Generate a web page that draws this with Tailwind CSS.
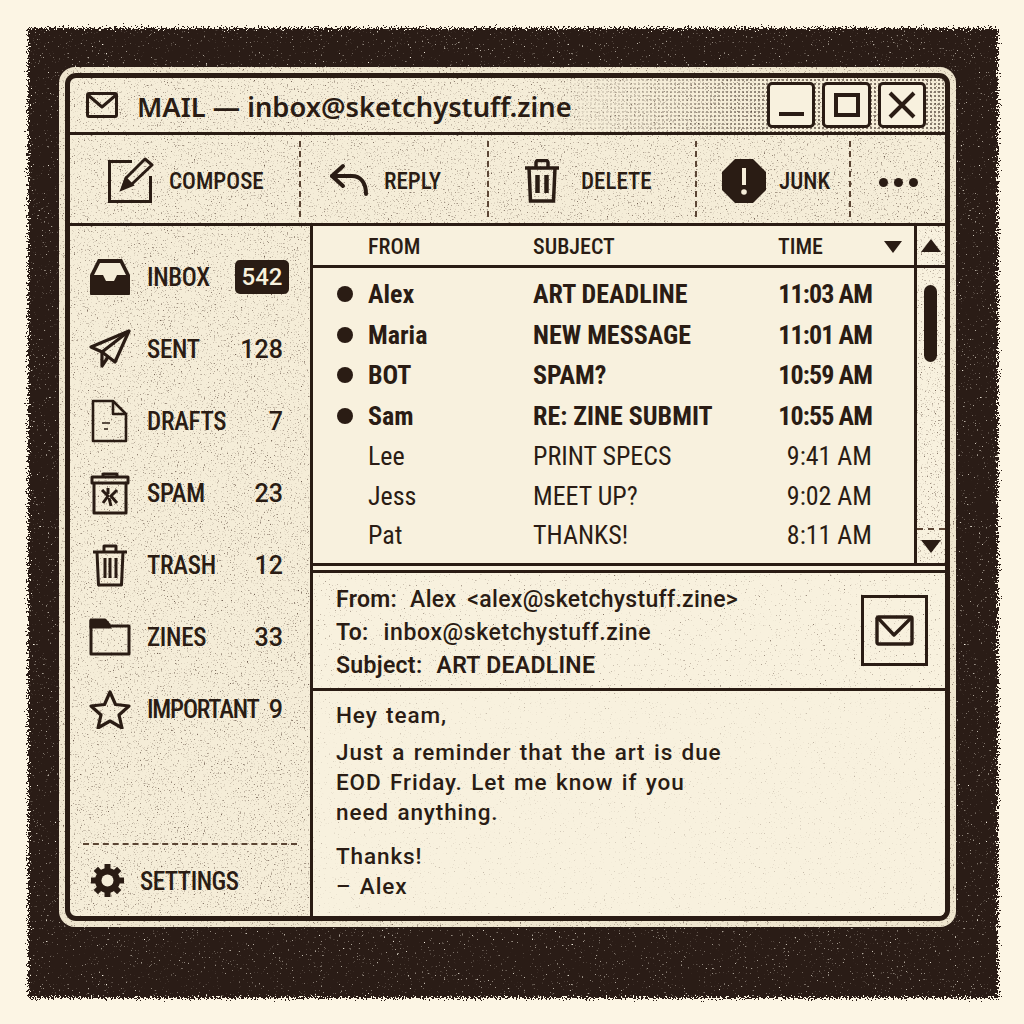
<!DOCTYPE html>
<html lang="en">
<head>
<meta charset="UTF-8">
<title>Mail</title>
<script src="https://cdn.jsdelivr.net/npm/@tailwindcss/browser@4"></script>
</head>
<body class="bg-[#fcf5e4] text-[#2a1c14] font-['Roboto',sans-serif]">
<!-- shared filters -->
<svg class="absolute w-0 h-0">
  <defs>
    <filter id="grain" x="0" y="0" width="100%" height="100%">
      <feTurbulence type="fractalNoise" baseFrequency="0.7" numOctaves="2" seed="4"/>
      <feColorMatrix values="0 0 0 0 0.16  0 0 0 0 0.11  0 0 0 0 0.08  2.4 2.4 0 0 -2.76"/>
    </filter>
    <filter id="grainfine" x="0" y="0" width="100%" height="100%">
      <feTurbulence type="fractalNoise" baseFrequency="0.8" numOctaves="2" seed="9"/>
      <feColorMatrix values="0 0 0 0 0.16  0 0 0 0 0.11  0 0 0 0 0.08  2.2 2.2 0 0 -2.78"/>
    </filter>
    <filter id="specks" x="0" y="0" width="100%" height="100%">
      <feTurbulence type="fractalNoise" baseFrequency="0.55" numOctaves="3" seed="12"/>
      <feColorMatrix values="0 0 0 0 0.95  0 0 0 0 0.9  0 0 0 0 0.78  3 3 0 0 -3.85"/>
    </filter>
    <filter id="rough" x="-2%" y="-2%" width="104%" height="104%">
      <feTurbulence type="fractalNoise" baseFrequency="0.6" numOctaves="2" seed="3"/>
      <feDisplacementMap in="SourceGraphic" scale="12"/>
    </filter>
  </defs>
</svg>

<div class="w-[1024px] h-[1024px] pt-[28px] pl-[28px] overflow-hidden">
  <!-- dark print panel -->
  <div class="relative w-[970px] h-[970px] pt-[39px] pl-[31px]">
    <div class="absolute inset-0 bg-[#2a1c14] [filter:url(#rough)]"></div>
    <svg class="absolute inset-0 w-full h-full pointer-events-none"><rect width="100%" height="100%" filter="url(#specks)"/></svg>

    <!-- window -->
    <div class="relative w-[897px] h-[860px] rounded-[16px] bg-[#efe6cf] p-[6px]">
      <svg class="absolute inset-0 w-full h-full pointer-events-none rounded-[16px]"><rect width="100%" height="100%" filter="url(#grain)"/></svg>
      <div class="relative w-full h-full rounded-[11px] border-[5px] border-[#2a1c14] bg-[#f5edd8] flex flex-col overflow-hidden">

        <!-- title bar -->
        <div class="relative h-[57px] shrink-0 border-b-[3px] border-[#2a1c14] flex items-center pl-[16px] pr-[19px]">
          <svg class="absolute inset-0 w-full h-full pointer-events-none"><rect width="100%" height="100%" filter="url(#grain)"/></svg>
          <div class="absolute inset-y-0 right-0 w-[400px] bg-[radial-gradient(#2a1c14_0.9px,transparent_1.4px)] bg-[size:4px_4px] [mask-image:linear-gradient(90deg,transparent,black_60%)] opacity-55"></div>
          <svg class="relative w-[32px] h-[26px] shrink-0" viewBox="0 0 32 26" fill="none" stroke="#2a1c14" stroke-width="3" stroke-linejoin="round"><rect x="1.5" y="1.5" width="29" height="23" rx="1.5"/><path d="M2 3l14 12L30 3"/></svg>
          <h1 class="relative ml-[19px] mt-[3px] font-['Noto_Sans',sans-serif] font-semibold text-[27.300px] leading-none whitespace-nowrap">MAIL — inbox@sketchystuff.zine</h1>
          <div class="relative ml-auto flex gap-[7px]">
            <div class="w-[48px] h-[46px] rounded-[5px] border-[3px] border-[#2a1c14] bg-[#f8f1de] flex items-end justify-center pb-[9px]"><div class="w-[25px] h-[4px] bg-[#2a1c14]"></div></div>
            <div class="w-[49px] h-[46px] rounded-[5px] border-[3px] border-[#2a1c14] bg-[#f8f1de] flex items-center justify-center"><div class="w-[26px] h-[24px] border-[4px] border-[#2a1c14]"></div></div>
            <div class="w-[48px] h-[46px] rounded-[5px] border-[3px] border-[#2a1c14] bg-[#f8f1de] flex items-center justify-center"><svg class="w-[28px] h-[28px]" viewBox="0 0 28 28" stroke="#2a1c14" stroke-width="4"><path d="M2 2l24 24M26 2L2 26"/></svg></div>
          </div>
        </div>

        <!-- toolbar -->
        <div class="relative h-[91px] shrink-0 border-b-[3px] border-[#2a1c14] flex items-stretch text-[23px] font-medium font-stretch-[84%] leading-none">
          <svg class="absolute inset-0 w-full h-full pointer-events-none"><rect width="100%" height="100%" filter="url(#grain)"/></svg>
          <div class="relative w-[229px] flex items-center pl-[37px] gap-[15px] pt-[4px]">
            <svg class="w-[47px] h-[47px] shrink-0 -mt-[3px]" viewBox="0 0 47 47" fill="none" stroke="#2a1c14" stroke-width="3"><path d="M25 5.500H2.500v40h41V20"/><path d="M16 31l3-9L38 3l7 6-20 19z" stroke-linejoin="round"/><path d="M15 33l4-10 6 6z" fill="#2a1c14"/></svg>
            <span>COMPOSE</span>
          </div>
          <div class="w-[2px] my-[6px] border-l-[2px] border-dashed border-[#5b4534]"></div>
          <div class="relative w-[186px] flex items-center pl-[28px] gap-[15px] pt-[4px]">
            <svg class="w-[40px] h-[34px] shrink-0 -mt-[3px]" viewBox="0 0 40 34" fill="none" stroke="#2a1c14" stroke-width="4" stroke-linecap="round" stroke-linejoin="round"><path d="M14 3L3 13l11 10"/><path d="M3 13h20c8 0 14 6 14 18"/></svg>
            <span>REPLY</span>
          </div>
          <div class="w-[2px] my-[6px] border-l-[2px] border-dashed border-[#5b4534]"></div>
          <div class="relative w-[206px] flex items-center pl-[35px] gap-[21px] pt-[4px]">
            <svg class="w-[36px] h-[44px] shrink-0" viewBox="0 0 36 44" fill="none" stroke="#2a1c14" stroke-width="3.5"><path d="M1 9h34"/><path d="M12 8V3.500c0-1 1-2 2-2h8c1 0 2 1 2 2V8"/><path d="M5 9l1.500 33h23L31 9"/><path d="M13.500 16v18M22.500 16v18" stroke-width="4.500"/></svg>
            <span>DELETE</span>
          </div>
          <div class="w-[2px] my-[6px] border-l-[2px] border-dashed border-[#5b4534]"></div>
          <div class="relative w-[152px] flex items-center pl-[25px] gap-[13px] pt-[4px]">
            <svg class="w-[44px] h-[44px] shrink-0" viewBox="0 0 44 44"><path d="M13 0h18l13 13v18L31 44H13L0 31V13z" fill="#2a1c14"/><path d="M22 9v17" stroke="#f5edd8" stroke-width="4"/><circle cx="22" cy="33" r="2.800" fill="#f5edd8"/></svg>
            <span class="font-stretch-[78%]">JUNK</span>
          </div>
          <div class="w-[2px] my-[6px] border-l-[2px] border-dashed border-[#5b4534]"></div>
          <div class="relative flex-1 flex items-center pl-[28px] gap-[6px] pt-[7px]">
            <span class="w-[9px] h-[9px] rounded-full bg-[#2a1c14]"></span><span class="w-[9px] h-[9px] rounded-full bg-[#2a1c14]"></span><span class="w-[9px] h-[9px] rounded-full bg-[#2a1c14]"></span>
          </div>
        </div>

        <!-- main -->
        <div class="flex-1 flex min-h-0">
          <!-- sidebar -->
          <aside class="relative w-[243px] shrink-0 border-r-[3px] border-[#2a1c14] flex flex-col text-[25px] font-medium font-stretch-[76%] leading-none">
            <svg class="absolute inset-0 w-full h-full pointer-events-none"><rect width="100%" height="100%" filter="url(#grain)"/></svg>
            <ul class="relative flex flex-col pt-[15px] pl-[19px] pr-[27px]">
              <li class="h-[72px] flex items-center">
                <svg class="w-[42px] h-[38px] shrink-0" viewBox="0 0 42 38"><path d="M1 36V17L9 1h24l8 16v19c0 1-1 1-1 1H2s-1 0-1-1z" fill="#2a1c14"/><path d="M5 17l6-12h20l6 12H28l-3 6h-8l-3-6z" fill="#f5edd8"/></svg>
                <span class="ml-[16px] tracking-[-0.3px]">INBOX</span>
                <span class="ml-auto -mr-[6px] w-[54px] h-[34px] rounded-[5px] bg-[#2a1c14] text-[#f8f1de] flex items-center justify-center font-stretch-[90%] text-[24px]">542</span>
              </li>
              <li class="h-[72px] flex items-center">
                <svg class="w-[42px] h-[40px] shrink-0" viewBox="0 0 42 40" fill="none" stroke="#2a1c14" stroke-width="3.200" stroke-linejoin="round"><path d="M40 2L2 18l11 5 13 10z"/><path d="M40 2L13 23l0 14 6-9"/></svg>
                <span class="ml-[16px] tracking-[-0.3px]">SENT</span><span class="ml-auto font-stretch-[95%]">128</span>
              </li>
              <li class="h-[72px] flex items-center">
                <svg class="w-[42px] h-[44px] shrink-0" viewBox="0 0 42 44" fill="none" stroke="#2a1c14" stroke-width="2.600" stroke-linejoin="round"><path d="M4 2h20l13 13v27H4z"/><path d="M24 2v13h13"/><path d="M13 24h8M15 30h4" stroke-width="1.500"/></svg>
                <span class="ml-[16px] tracking-[-0.3px]">DRAFTS</span><span class="ml-auto font-stretch-[95%]">7</span>
              </li>
              <li class="h-[72px] flex items-center">
                <svg class="w-[42px] h-[44px] shrink-0" viewBox="0 0 42 44" fill="none" stroke="#2a1c14" stroke-width="3" stroke-linejoin="round"><path d="M3 6h36v6H3z"/><path d="M14 5V3h14v3"/><path d="M5 12v30h32V12"/><path d="M13 19l6 6-5 7M28 19l-6 6 6 7M19 17v6M20 27l2 8" stroke-width="3"/></svg>
                <span class="ml-[16px] tracking-[-0.3px]">SPAM</span><span class="ml-auto font-stretch-[95%]">23</span>
              </li>
              <li class="h-[72px] flex items-center">
                <svg class="w-[42px] h-[44px] shrink-0" viewBox="0 0 42 44" fill="none" stroke="#2a1c14" stroke-width="3" stroke-linejoin="round"><path d="M4 9h34"/><path d="M15 8V3h12v5"/><path d="M8 9l1.500 33h23L34 9"/><path d="M16 15v20M21 15v20M27 15v20" stroke-width="3"/></svg>
                <span class="ml-[16px] tracking-[-0.3px]">TRASH</span><span class="ml-auto font-stretch-[95%]">12</span>
              </li>
              <li class="h-[72px] flex items-center">
                <svg class="w-[42px] h-[38px] shrink-0" viewBox="0 0 42 38" fill="none" stroke="#2a1c14" stroke-width="3"><path d="M2 36V2h14l5 6h19v28z" stroke-linejoin="round"/><path d="M2 4h14l4 5H2z" fill="#2a1c14"/></svg>
                <span class="ml-[16px] tracking-[-0.3px]">ZINES</span><span class="ml-auto font-stretch-[95%]">33</span>
              </li>
              <li class="h-[72px] flex items-center">
                <svg class="w-[42px] h-[40px] shrink-0" viewBox="0 0 42 40" fill="none" stroke="#2a1c14" stroke-width="3.200" stroke-linejoin="round"><path d="M21 3l5.500 12.500L40 17l-10 9 3 13-12-7-12 7 3-13L2 17l13.500-1.500z"/></svg>
                <span class="ml-[16px] whitespace-nowrap font-stretch-[75%] tracking-[-1.200px]">IMPORTANT</span><span class="ml-auto font-stretch-[95%]">9</span>
              </li>
            </ul>
            <div class="relative mt-auto mx-[13px] border-t-[2px] border-dashed border-[#5b4534]"></div>
            <div class="relative h-[71px] flex items-center pl-[20px] gap-[15px]">
              <svg class="w-[35px] h-[35px] shrink-0" viewBox="0 0 35 35"><circle cx="17.500" cy="17.500" r="12.500" fill="#2a1c14"/><path d="M17.500 1v33M1 17.500h33M5.800 5.800l23.400 23.400M29.200 5.800L5.800 29.200" stroke="#2a1c14" stroke-width="6"/><circle cx="17.500" cy="17.500" r="6" fill="#f5edd8"/></svg>
              <span class="pt-[2px] tracking-[-0.5px]">SETTINGS</span>
            </div>
          </aside>

          <!-- right column -->
          <div class="flex-1 flex flex-col min-w-0 bg-[#f8f1de]">
            <!-- list + scrollbar -->
            <div class="h-[340px] shrink-0 flex border-b-[3px] border-[#2a1c14]">
              <div class="w-[604px] shrink-0 border-r-[3px] border-[#2a1c14] flex flex-col">
                <div class="h-[42px] shrink-0 border-b-[3px] border-[#2a1c14] flex items-center pl-[55px] pt-[3px] text-[22px] font-medium font-stretch-[84%] leading-none">
                  <span class="w-[165px]">FROM</span><span class="w-[245px]">SUBJECT</span><span class="w-[106px]">TIME</span>
                  <span class="w-0 h-0 border-x-[9px] border-x-transparent border-t-[12px] border-t-[#2a1c14]"></span>
                </div>
                <div class="flex-1 pt-[6px] text-[26px] font-stretch-[78%] leading-none whitespace-nowrap">
                  <div class="h-[40.500px] flex items-center font-bold"><span class="w-[16px] h-[16px] ml-[24px] mr-[15px] rounded-full bg-[#2a1c14]"></span><span class="w-[165px]">Alex</span><span class="w-[230px]">ART DEADLINE</span><span class="w-[109px] text-right font-stretch-[75%] tracking-[-0.900px]">11:03 AM</span></div>
                  <div class="h-[40.500px] flex items-center font-bold"><span class="w-[16px] h-[16px] ml-[24px] mr-[15px] rounded-full bg-[#2a1c14]"></span><span class="w-[165px]">Maria</span><span class="w-[230px]">NEW MESSAGE</span><span class="w-[109px] text-right font-stretch-[75%] tracking-[-0.900px]">11:01 AM</span></div>
                  <div class="h-[40.500px] flex items-center font-bold"><span class="w-[16px] h-[16px] ml-[24px] mr-[15px] rounded-full bg-[#2a1c14]"></span><span class="w-[165px]">BOT</span><span class="w-[230px]">SPAM?</span><span class="w-[109px] text-right font-stretch-[75%] tracking-[-0.900px]">10:59 AM</span></div>
                  <div class="h-[40.500px] flex items-center font-bold"><span class="w-[16px] h-[16px] ml-[24px] mr-[15px] rounded-full bg-[#2a1c14]"></span><span class="w-[165px]">Sam</span><span class="w-[230px]">RE: ZINE SUBMIT</span><span class="w-[109px] text-right font-stretch-[75%] tracking-[-0.900px]">10:55 AM</span></div>
                  <div class="h-[40px] flex items-center pl-[55px]"><span class="w-[165px]">Lee</span><span class="w-[230px]">PRINT SPECS</span><span class="w-[109px] text-right">9:41 AM</span></div>
                  <div class="h-[39px] flex items-center pl-[55px]"><span class="w-[165px]">Jess</span><span class="w-[230px]">MEET UP?</span><span class="w-[109px] text-right">9:02 AM</span></div>
                  <div class="h-[39px] flex items-center pl-[55px]"><span class="w-[165px]">Pat</span><span class="w-[230px]">THANKS!</span><span class="w-[109px] text-right">8:11 AM</span></div>
                </div>
              </div>
              <!-- scrollbar -->
              <div class="relative flex-1 flex flex-col items-center">
                <svg class="absolute inset-0 w-full h-full pointer-events-none"><rect width="100%" height="100%" filter="url(#grain)"/></svg>
                <div class="relative h-[42px] w-full shrink-0 border-b-[3px] border-[#2a1c14] flex items-center justify-center"><span class="w-0 h-0 border-x-[10px] border-x-transparent border-b-[13px] border-b-[#2a1c14]"></span></div>
                <div class="relative mt-[17px] -ml-[2px] w-[13px] h-[77px] rounded-full bg-[#2a1c14]"></div>
                <div class="relative mt-auto w-full border-t-[2px] border-dashed border-[#5b4534]"></div>
                <div class="relative h-[33px] flex items-center"><span class="w-0 h-0 border-x-[10px] border-x-transparent border-t-[13px] border-t-[#2a1c14]"></span></div>
              </div>
            </div>
            <!-- gap between double rule -->
            <div class="h-[4px] shrink-0 border-b-[3px] border-[#2a1c14] box-content"></div>
            <!-- message header -->
            <div class="relative h-[118px] shrink-0 border-b-[3px] border-[#2a1c14] pl-[23px] pt-[10px] flex flex-col text-[23px] font-medium font-stretch-[92%] leading-[33px] tracking-[0.3px]">
              <svg class="absolute inset-0 w-full h-full pointer-events-none"><rect width="100%" height="100%" filter="url(#grainfine)"/></svg>
              <div class="relative"><span class="font-semibold">From:</span> <span class="ml-[7px]">Alex</span> <span class="ml-[5px]">&lt;alex@sketchystuff.zine&gt;</span></div>
              <div class="relative"><span class="font-semibold">To:</span> <span class="ml-[9px] tracking-[0.6px]">inbox@sketchystuff.zine</span></div>
              <div class="relative"><span class="font-semibold">Subject:</span> <span class="ml-[8px] font-semibold">ART DEADLINE</span></div>
              <div class="absolute right-[17px] top-[22px] w-[67px] h-[71px] border-[3px] border-[#2a1c14] flex items-center justify-center">
                <svg class="w-[39px] h-[31px]" viewBox="0 0 39 31" fill="none" stroke="#2a1c14" stroke-width="3.400" stroke-linejoin="round"><rect x="2" y="2" width="35" height="27" rx="1.500"/><path d="M3 3l16 17L36 3"/></svg>
              </div>
            </div>
            <!-- message body -->
            <div class="relative flex-1 pl-[23px] pt-[9px] text-[22.500px] font-medium font-stretch-[90%] leading-[30px] tracking-[0.9px] [word-spacing:2px] whitespace-nowrap">
              <svg class="absolute inset-0 w-full h-full pointer-events-none"><rect width="100%" height="100%" filter="url(#grainfine)" opacity="0.5"/></svg>
              <p class="relative">Hey team,</p>
              <p class="relative mt-[7px]">Just a reminder that the art is due<br>EOD Friday. Let me know if you<br>need anything.</p>
              <p class="relative mt-[14px]">Thanks!<br>– Alex</p>
            </div>
          </div>
        </div>
      </div>
    </div>
  </div>
</div>
</body>
</html>
